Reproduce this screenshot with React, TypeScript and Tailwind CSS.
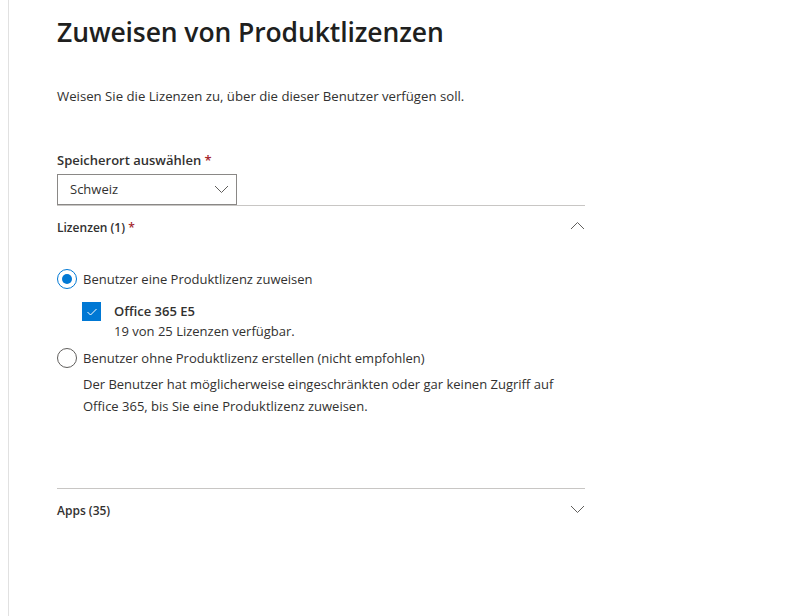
import React from "react";

const font = { fontFamily: '"Open Sans", "Noto Sans", sans-serif' };

function ChevronDown({ className = "" }: { className?: string }) {
  return (
    <svg width="15" height="9" viewBox="0 0 15 9" className={className} fill="none">
      <path d="M1 1 L7.5 7.5 L14 1" stroke="#605e5c" strokeWidth="1" />
    </svg>
  );
}
function ChevronUp({ className = "" }: { className?: string }) {
  return (
    <svg width="15" height="9" viewBox="0 0 15 9" className={className} fill="none">
      <path d="M1 8 L7.5 1.5 L14 8" stroke="#605e5c" strokeWidth="1" />
    </svg>
  );
}

export default function App() {
  return (
    <div className="min-h-[616px] w-[801px] bg-white text-[#323130]" style={font}>
      <div className="ml-[8px] min-h-[616px] border-l border-[#e1e1e1] pl-[48px] pt-[12px]">
        <div className="w-[528px]">
          <h1 className="text-[26.5px] font-semibold leading-[40px] text-[#201f1e] tracking-[-0.1px]">
            Zuweisen von Produktlizenzen
          </h1>
          <p className="mt-[34px] text-[13.2px] leading-[20px]">
            Weisen Sie die Lizenzen zu, über die dieser Benutzer verfügen soll.
          </p>
          <div className="mt-[44px] text-[13px] font-semibold leading-[20px]">
            Speicherort auswählen <span className="text-[#a4262c]">*</span>
          </div>
          <div className="mt-[4px] flex h-[31px] w-[180px] items-center justify-between border border-[#8a8886] pl-[12px] pr-[7px] text-[13px]">
            <span>Schweiz</span>
            <ChevronDown />
          </div>
          <div className="border-t border-[#c8c6c4]" />
          <div className="mt-[12px] flex items-center justify-between">
            <div className="text-[12px] font-semibold leading-[20px]">
              Lizenzen (1) <span className="text-[#a4262c]">*</span>
            </div>
            <ChevronUp className="-mt-[6px]" />
          </div>

          <div className="mt-[31px] flex items-center gap-[6px]">
            <span className="flex h-[20px] w-[20px] items-center justify-center rounded-full border border-[#0078d4]">
              <span className="h-[10px] w-[10px] rounded-full bg-[#0078d4]" />
            </span>
            <span className="text-[13px] leading-[20px]">Benutzer eine Produktlizenz zuweisen</span>
          </div>

          <div className="mt-[12px] ml-[25px] flex gap-[13px]">
            <span className="mt-[1px] flex h-[19px] w-[19px] items-center justify-center bg-[#0078d4]">
              <svg width="12" height="10" viewBox="0 0 12 10" fill="none">
                <path d="M1.5 5 L4.5 8 L10.5 2" stroke="white" strokeWidth="1" />
              </svg>
            </span>
            <div>
              <div className="text-[13px] font-semibold leading-[20px]">Office 365 E5</div>
              <div className="text-[13px] leading-[20px]">19 von 25 Lizenzen verfügbar.</div>
            </div>
          </div>

          <div className="mt-[7px] flex items-center gap-[6px]">
            <span className="h-[20px] w-[20px] rounded-full border border-[#605e5c]" />
            <span className="text-[13px] leading-[20px]">
              Benutzer ohne Produktlizenz erstellen (nicht empfohlen)
            </span>
          </div>
          <p className="mt-[5px] ml-[26px] text-[13px] leading-[22px]">
            Der Benutzer hat möglicherweise eingeschränkten oder gar keinen Zugriff auf
            <br />
            Office 365, bis Sie eine Produktlizenz zuweisen.
          </p>

          <div className="mt-[71px] border-t border-[#c8c6c4]" />
          <div className="mt-[12px] flex items-center justify-between">
            <div className="text-[12px] font-semibold leading-[20px]">Apps (35)</div>
            <ChevronDown className="-mt-[4px]" />
          </div>
        </div>
      </div>
    </div>
  );
}
